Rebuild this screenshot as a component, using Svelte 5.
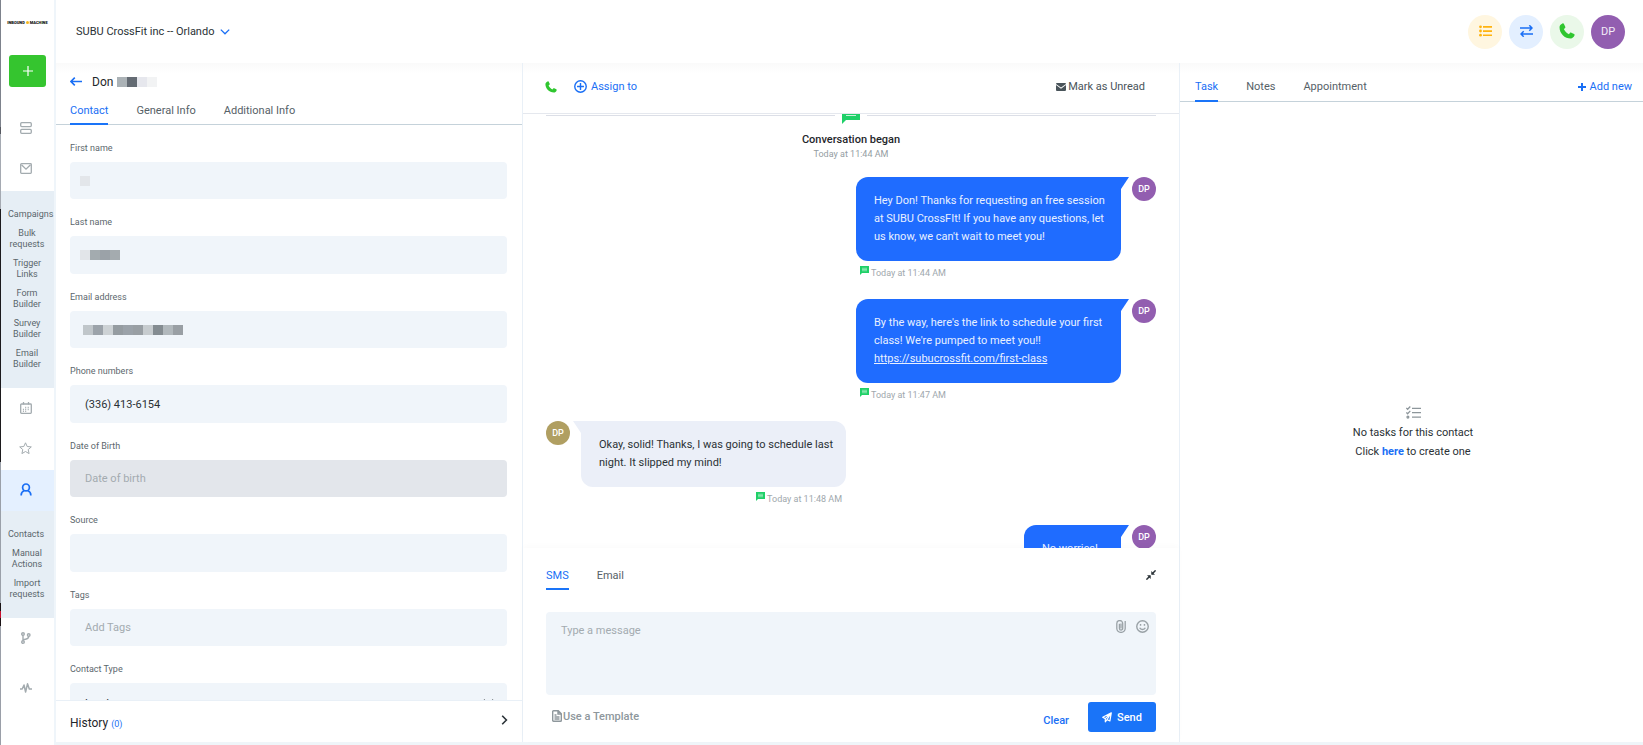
<script>
  const campaignLinks = [['Bulk', 'requests'], ['Trigger', 'Links'], ['Form', 'Builder'], ['Survey', 'Builder'], ['Email', 'Builder']];
  const contactLinks = [['Manual', 'Actions'], ['Import', 'requests']];

  const fields = [
    { id: 'first', label: 'First name', mask: ['#e3e6ea'] },
    { id: 'last', label: 'Last name', mask: ['#e2e5e9', '#a3abaf', '#9ba2a8', '#a4abaf'] },
    { id: 'email', label: 'Email address', wide: true, mask: ['#c0c6ca', '#9ca3aa', '#cdd2d5', '#959ca1', '#9ba2a9', '#999fa4', '#c7cccf', '#848c91', '#b1b8bc', '#999fa4'] },
    { id: 'phone', label: 'Phone numbers', value: '(336) 413-6154' },
    { id: 'dob', label: 'Date of Birth', placeholder: 'Date of birth', muted: true },
    { id: 'source', label: 'Source' },
    { id: 'tags', label: 'Tags', placeholder: 'Add Tags' },
    { id: 'type', label: 'Contact Type', options: ['Lead', 'Customer'] }
  ];
  const nameMask = ['#abb2b6', '#646b73', '#e6e7ed', '#f2f3f4'];

  const messages = [
    { out: true, text: 'Hey Don! Thanks for requesting an free session\nat SUBU CrossFIt! If you have any questions, let\nus know, we can\'t wait to meet you!', time: 'Today at 11:44 AM' },
    { out: true, text: 'By the way, here\'s the link to schedule your first\nclass! We\'re pumped to meet you!!\n', link: 'https://subucrossfit.com/first-class', time: 'Today at 11:47 AM' },
    { out: false, text: 'Okay, solid! Thanks, I was going to schedule last\nnight. It slipped my mind!', time: 'Today at 11:48 AM' },
    { out: true, short: true, text: 'No worries!' }
  ];
</script>

{#snippet phone(size)}
  <svg width={size} height={size} viewBox="0 0 24 24" fill="currentColor" aria-hidden="true"><path d="M5.2.8c.8-.5 1.8-.2 2.2.6l2 4.1c.4.8.2 1.6-.5 2.2L7.2 9.1c1.5 3.4 4.200 6.100 7.700 7.700l1.400-1.700c.600-.700 1.400-.900 2.200-.500l4.100 2c.800.400 1.100 1.400.600 2.200-1.300 2.600-3.200 4.400-5.400 4.400C8.500 23.200.8 15.500.8 6.200.8 4 2.600 2.100 5.200.8z"/></svg>
{/snippet}

{#snippet sms(size)}
  <svg class="sms" width={size} height={size} viewBox="0 0 18 18" aria-hidden="true"><path d="M0 0h18v14H4l-4 4z" fill="#1fd068"/><path d="M4 4.500h10M4 7h10M4 9.500h10" stroke="#fff" stroke-opacity=".75" stroke-width="1.200"/></svg>
{/snippet}

{#snippet mosaic(cells)}
  <span class="mosaic" aria-hidden="true">{#each cells as c}<i style="background:{c}"></i>{/each}</span>
{/snippet}

<div class="app">
  <aside class="rail">
    <div class="logo">INBOUND<b></b>MACHINE</div>
    <button class="create" aria-label="Create">
      <svg width="10" height="10" viewBox="0 0 10 10"><path d="M5 0v10M0 5h10" stroke="#fff" stroke-width="1.200"/></svg>
    </button>
    <nav>
      <a href="#dashboard" class="item" aria-label="Dashboard">
        <svg width="12" height="12" viewBox="0 0 12 12" fill="none" stroke="currentColor" stroke-width="1.300"><rect x=".7" y=".7" width="10.600" height="3.900" rx="1"/><rect x=".7" y="7.400" width="10.600" height="3.900" rx="1"/></svg>
      </a>
      <a href="#mail" class="item" aria-label="Mail">
        <svg width="12" height="11" viewBox="0 0 12 11" fill="none" stroke="currentColor" stroke-width="1.300"><rect x=".7" y=".7" width="10.600" height="9.600" rx=".8"/><path d="M1.500 1.800 6 6.200l4.500-4.400"/></svg>
      </a>
      <div class="sub">
        <a href="#campaigns">Campaigns</a>
        {#each campaignLinks as [a, b]}<a href="#{a}">{a}<br />{b}</a>{/each}
      </div>
      <a href="#calendar" class="item" aria-label="Calendar">
        <svg width="12" height="12" viewBox="0 0 12 12" fill="none" stroke="currentColor" stroke-width="1.300"><rect x=".7" y="2" width="10.600" height="9.300" rx=".8"/><path d="M3.500 0v2.500M8.500 0v2.500"/><path d="M5.200 5.500h1M7.700 5.500h1M2.900 7.500h1M5.200 7.500h1M7.700 7.500h1M2.900 9.300h1M5.200 9.300h1"/></svg>
      </a>
      <a href="#reviews" class="item" aria-label="Reviews">
        <svg width="13" height="12" viewBox="0 0 13 12" fill="none" stroke="currentColor" stroke-linejoin="round"><path d="m6.500.8 1.700 3.700 4.100.4-3.100 2.700.9 4-3.600-2.100-3.600 2.100.9-4L.7 4.900l4.100-.4z"/></svg>
      </a>
      <a href="#contacts" class="item active" aria-label="Contacts">
        <svg width="12" height="13" viewBox="0 0 12 13" fill="none" stroke="currentColor" stroke-width="1.700"><circle cx="6" cy="4.400" r="3.400"/><path d="M1.200 12.500V12c0-2.200 1.200-3.700 3-4.300M10.800 12.500V12c0-2.200-1.200-3.700-3-4.300"/></svg>
      </a>
      <div class="sub">
        <a href="#contacts">Contacts</a>
        {#each contactLinks as [a, b]}<a href="#{a}">{a}<br />{b}</a>{/each}
      </div>
      <a href="#workflows" class="item" aria-label="Workflows">
        <svg width="10" height="12" viewBox="0 0 10 12" fill="none" stroke="currentColor" stroke-width="1.400"><circle cx="2" cy="2" r="1.300"/><circle cx="2" cy="10" r="1.300"/><circle cx="7.700" cy="3" r="1.300"/><path d="M2 3.300v5.400M7.700 4.300c0 2-1.700 2.700-3.200 2.900S2 8 2 8.700"/></svg>
      </a>
      <a href="#reporting" class="item last" aria-label="Reporting">
        <svg width="12" height="10" viewBox="0 0 12 10" fill="none" stroke="currentColor" stroke-width="1.500" stroke-linejoin="round"><path d="M0 6h2.200L4 2l1.600 7L7.500.8 9.300 6H12"/></svg>
      </a>
    </nav>
  </aside>

  <div class="main">
    <header class="top">
      <button class="location">SUBU CrossFit inc -- Orlando
        <svg width="10" height="6" viewBox="0 0 10 6" fill="none" stroke="#1a6ff5" stroke-width="1.300"><path d="m.8.6 4.200 4.200L9.200.6"/></svg>
      </button>
      <div class="actions">
        <button class="round yellow" aria-label="Tasks">
          <svg width="13" height="12" viewBox="0 0 13 12" fill="currentColor"><path d="M4 1h9v1.700H4zM4 5.200h9v1.700H4zM4 9.400h9v1.700H4z"/><circle cx="1.500" cy="1.800" r="1.400"/><circle cx="1.500" cy="6" r="1.400"/><circle cx="1.500" cy="10.200" r="1.400"/></svg>
        </button>
        <button class="round blue" aria-label="Switch">
          <svg width="13" height="12" viewBox="0 0 13 12" fill="none" stroke="currentColor" stroke-width="1.500"><path d="M0 3h12M9.300.3 12 3 9.300 5.700M13 9H1M3.700 6.300 1 9l2.700 2.700"/></svg>
        </button>
        <button class="round green" aria-label="Call">{@render phone(16)}</button>
        <button class="round user" aria-label="Account">DP</button>
      </div>
    </header>

    <div class="columns">
      <section class="contact">
        <div class="person">
          <a href="#back" aria-label="Back"><svg width="12" height="9" viewBox="0 0 12 9" fill="none" stroke="#1a6ff5" stroke-width="1.600"><path d="M12 4.500H1M4.800.600.900 4.500l3.900 3.900"/></svg></a>
          <h1>Don</h1>{@render mosaic(nameMask)}
        </div>
        <div class="tabs" role="tablist">
          <button class="tab on" role="tab" aria-selected="true">Contact</button>
          <button class="tab" role="tab" aria-selected="false">General Info</button>
          <button class="tab" role="tab" aria-selected="false">Additional Info</button>
        </div>
        <form>
          {#each fields as f}
            <div class="field">
              <label for={f.id}>{f.label}</label>
              <div class="control" class:muted={f.muted} class:wide={f.wide}>
                {#if f.options}
                  <select id={f.id}>{#each f.options as o}<option>{o}</option>{/each}</select>
                  <svg class="caret" width="11" height="7" viewBox="0 0 11 7" fill="none" stroke="#2b3338" stroke-width="1.600"><path d="m.8.8 4.700 4.700L10.200.8"/></svg>
                {:else}
                  <input id={f.id} type="text" value={f.value ?? ''} placeholder={f.placeholder} />
                  {#if f.mask}{@render mosaic(f.mask)}{/if}
                {/if}
              </div>
            </div>
          {/each}
        </form>
        <button class="history">
          <span>History <small>(0)</small></span>
          <svg width="7" height="10" viewBox="0 0 7 10" fill="none" stroke="#2b3338" stroke-width="1.600"><path d="m1.200.8 4.200 4.200-4.200 4.200"/></svg>
        </button>
      </section>

      <section class="conversation">
        <div class="bar">
          <button class="call" aria-label="Call contact">{@render phone(12)}</button>
          <button class="assign">
            <svg width="13" height="13" viewBox="0 0 12 12" fill="none" stroke="currentColor" stroke-width="1.300"><circle cx="6" cy="6" r="5.300"/><path d="M6 2.800v6.400M2.800 6h6.400"/></svg>
            Assign to
          </button>
          <button class="unread">
            <svg width="10" height="8" viewBox="0 0 10 8" fill="currentColor"><path d="M0 .9C0 .4.4 0 .9 0h8.200c.5 0 .9.400.9.900L5 4.600zM0 2l5 3.700L10 2v5.100c0 .5-.4.900-.9.900H.9C.4 8 0 7.600 0 7.100z"/></svg>
            Mark as Unread
          </button>
        </div>

        <div class="thread">
          <div class="began">
            <div class="rule">{@render sms(18)}</div>
            <strong>Conversation began</strong>
            <span>Today at 11:44 AM</span>
          </div>
          {#each messages as m}
            <article class:out={m.out}>
              <span class="avatar">DP</span>
              <div class="body">
                <p class="bubble" class:short={m.short}><svg class="tail" width="8" height="12" viewBox="0 0 8 12" aria-hidden="true"><path d="M0 0h8L0 12z" fill="currentColor"/></svg>{m.text}{#if m.link}<a href={m.link}>{m.link}</a>{/if}</p>
                {#if m.time}<div class="time">{@render sms(9)}{m.time}</div>{/if}
              </div>
            </article>
          {/each}
        </div>

        <div class="composer">
          <div class="modes">
            <div class="tabs" role="tablist">
              <button class="tab on" role="tab" aria-selected="true">SMS</button>
              <button class="tab" role="tab" aria-selected="false">Email</button>
            </div>
            <button class="collapse" aria-label="Collapse">
              <svg width="10" height="10" viewBox="0 0 10 10" stroke="#2b3338" fill="#2b3338"><path d="M9.600.400 6 4M.400 9.600 4 6" stroke-width="1.500"/><path d="M5.300 1v3.700H9zM4.700 9V5.300H1z" stroke="none"/></svg>
            </button>
          </div>
          <div class="message">
            <textarea aria-label="Message" placeholder="Type a message"></textarea>
            <div class="tools">
              <button aria-label="Attach file"><svg width="10" height="13" viewBox="0 0 10 13" fill="none" stroke="currentColor" stroke-width="1.300"><path d="M9.200 1v7.600a4.100 3.700 0 0 1-8.400 0V3.400a2.900 2.800 0 0 1 5.900 0v5a1.600 1.600 0 0 1-3.300 0V3.700M5 3.500v5"/></svg></button>
              <button aria-label="Emoji"><svg width="13" height="13" viewBox="0 0 12 12" fill="none" stroke="currentColor" stroke-width="1.300"><circle cx="6" cy="6" r="5.300"/><path d="M3.400 7.200c.9 2 4.300 2 5.200 0M4.200 3.800v1.400M7.800 3.800v1.400"/></svg></button>
            </div>
          </div>
          <div class="submit">
            <button class="template">
              <svg width="10" height="12" viewBox="0 0 10 12" fill="none" stroke="currentColor" stroke-width="1.400"><path d="M.7 1.500c0-.5.300-.8.800-.8h4.800l3 3v6.800c0 .5-.3.8-.8.8h-7c-.5 0-.8-.3-.8-.8zM6 .700V4h3.300M2.500 5h2M2.500 7h5M2.500 9h5"/></svg>Use a Template
            </button>
            <button class="clear">Clear</button>
            <button class="send">
              <svg width="10" height="11" viewBox="0 0 10 11" fill="none" stroke="#fff" stroke-width="1.200" stroke-linejoin="round"><path d="M9.300.800.700 5.300l2.600 1.300v3.200l1.700-2.100 2.900 1.200zM3.300 6.600l6-5.800L5 7.700"/></svg>
              Send
            </button>
          </div>
        </div>
      </section>

      <section class="tasks">
        <div class="tabs" role="tablist">
          <button class="tab on" role="tab" aria-selected="true">Task</button>
          <button class="tab" role="tab" aria-selected="false">Notes</button>
          <button class="tab" role="tab" aria-selected="false">Appointment</button>
          <button class="add">
            <svg width="8" height="8" viewBox="0 0 8 8"><path d="M4 0v8M0 4h8" stroke="currentColor" stroke-width="2"/></svg>
            Add new
          </button>
        </div>
        <div class="empty">
          <svg width="15" height="13" viewBox="0 0 15 13" fill="none" stroke="#8d969b" stroke-width="1.300"><path d="M6 2.300h9M6 6.700h9M6 11.100h9M.300 2l1.300 1.300L4.300.500M.300 6.400l1.300 1.300 2.700-2.800"/><circle cx="1.900" cy="11.100" r=".900"/></svg>
          <p>No tasks for this contact</p>
          <p>Click <a href="#new-task">here</a> to create one</p>
        </div>
      </section>
    </div>
  </div>
</div>

<style>
  :global(body) {
    font: 11px/16px Roboto, sans-serif;
    color: #2a3135;
    background: #fff;
  }
  :global(*) { box-sizing: border-box; }
  button, input, textarea, select { font: inherit; color: inherit; background: none; border: 0; padding: 0; margin: 0; outline: 0; }
  button { cursor: pointer; }
  a { color: inherit; text-decoration: none; }
  p, h1 { margin: 0; }
  svg { display: block; flex: none; }

  .app { display: flex; height: 100vh; overflow: hidden; }

  .rail {
    flex: none;
    width: 56px;
    display: flex;
    flex-direction: column;
    border-right: 2px solid #eff5fa;
    padding-left: 1px;
    background: linear-gradient(#7d828c 0 17%, #55585f 17% 18%, #a5aab2 18% 28%, #1c1a1d 28% 62%, #9aa0a9 62% 81%, #1a1214 81% 82%, #c8102e 82% 83%, #1a1214 83% 84%, #9a9fa8 84%) left / 1px 100% no-repeat;
  }
  .logo {
    height: 55px;
    padding-top: 20px;
    display: flex;
    justify-content: center;
    font-size: 4px;
    line-height: 6px;
    font-weight: 900;
    color: #111;
    white-space: nowrap;
  }
  .logo b { width: 3px; height: 3px; margin: 1px 1px 0; border-radius: 2px; background: #f7b61c; }
  .create {
    align-self: center;
    display: grid;
    place-items: center;
    width: 37px;
    height: 32px;
    border-radius: 3px;
    background: #35c52f;
  }
  nav { padding-top: 21px; color: #a3abaf; }
  .item { display: flex; justify-content: center; align-items: center; height: 40px; padding-right: 4px; }
  .item:nth-child(2) { margin-bottom: 3px; }
  .item.last { margin-top: 10px; }
  .item.active { height: 41px; margin-top: 2px; padding-bottom: 3px; background: #e4f0ff; color: #1a6ff5; }
  .sub {
    display: flex;
    flex-direction: column;
    gap: 8px;
    padding: 18px 0 18px 7px;
    background: #e6eef5;
    color: #5a666c;
    font-size: 9px;
    line-height: 11px;
    text-align: center;
  }
  .sub a { width: 38px; white-space: nowrap; }
  .sub a:first-child { text-align: left; }

  .main { flex: 1; min-width: 0; display: flex; flex-direction: column; border-bottom: 3px solid #eff5f9; }
  .top { flex: none; display: flex; align-items: center; justify-content: space-between; height: 63px; padding: 0 18px 0 20px; }
  .location { display: flex; align-items: center; gap: 6px; }
  .actions { display: flex; gap: 7px; }
  .round { display: grid; place-items: center; width: 34px; height: 34px; border-radius: 50%; padding-bottom: 2px; }
  .yellow { background: #fff6e0; color: #ffb30f; }
  .blue { background: #e3efff; color: #1a6ff5; }
  .green { background: #eaf8e9; color: #2fc62f; }
  .user { background: #925eb0; color: #f3ecf7; padding: 0; }

  .columns {
    flex: 1;
    min-height: 0;
    display: grid;
    grid-template-columns: minmax(0, 467fr) minmax(0, 657fr) minmax(0, 463fr);
    background: linear-gradient(#fafafa, #fff 10px);
  }
  section { display: flex; flex-direction: column; min-height: 0; }
  .contact, .conversation { border-right: 1px solid #e9f0f7; }

  .tabs { display: flex; gap: 28px; }
  .tab { color: #566167; border-bottom: 2px solid transparent; white-space: nowrap; }
  .tab.on { color: #1a6ff5; border-color: #1a74f8; }
  .contact > .tabs, .tasks > .tabs {
    padding: 0 11px 0 14px;
    box-shadow: inset 0 -1px #c5d2da;
  }

  .person { display: flex; align-items: center; height: 37px; padding: 0 14px; }
  h1 { font-size: 12px; font-weight: 400; margin: 0 4px 0 10px; color: #1f272b; }
  .mosaic { display: flex; }
  .mosaic i { width: 10px; height: 10px; }
  .contact > .tabs .tab { height: 25px; padding-bottom: 1px; }

  form { flex: 1; min-height: 0; overflow: hidden; padding: 17px 15px 0 14px; }
  .field { display: flex; flex-direction: column; gap: 8px; margin-bottom: 17px; }
  label { font-size: 9px; line-height: 12px; color: #5c676d; }
  .control { display: grid; align-items: center; height: 37px; background: #f0f5fa; border-radius: 4px; }
  .field:nth-child(even) .control { height: 38px; }
  .control > * { grid-area: 1 / 1; }
  .control .mosaic { padding-left: 10px; }
  .control.wide .mosaic { padding-left: 13px; }
  .control.muted { background: #e3e6eb; }
  input, select { width: 100%; height: 100%; padding: 0 15px; appearance: none; }
  select { padding-top: 4px; }
  .caret { justify-self: end; margin: 0 13px 0 0; }
  ::placeholder { color: #a3abb0; opacity: 1; }
  .history {
    flex: none;
    display: flex;
    justify-content: space-between;
    align-items: center;
    height: 42px;
    padding: 0 14px;
    border-top: 1px solid #e9f0f7;
    background: #fff;
    font-size: 12px;
    color: #1f272b;
  }
  .history span { padding-top: 3px; }
  .history svg { margin-bottom: 4px; }
  small { font-size: 9px; color: #1a6ff5; }

  .bar {
    flex: none;
    display: flex;
    align-items: center;
    height: 51px;
    padding: 0 34px 2px 22px;
    border-bottom: 1px solid #e5e8ee;
  }
  .call { color: #2fc62f; margin-right: 17px; }
  .assign, .unread { display: flex; align-items: center; }
  .assign { gap: 4px; color: #1a6ff5; }
  .assign svg { margin-bottom: 2px; }
  .unread { gap: 2px; margin-left: auto; color: #49545a; }

  .thread { flex: 1; min-height: 0; overflow: hidden; padding: 0 23px; }
  .began { display: flex; flex-direction: column; align-items: center; margin: -8px 0 16px; font-size: 9px; line-height: 14px; color: #949da2; }
  .began strong { font-size: 11px; line-height: 15px; font-weight: 500; color: #1f272b; margin-top: 8px; }
  .rule { align-self: stretch; display: flex; align-items: center; gap: 7px; }
  .rule::before, .rule::after { content: ''; flex: 1; height: 1px; background: #dcdfe7; }

  article { display: flex; align-items: flex-start; gap: 11px; margin-bottom: 19px; }
  article.out { flex-direction: row-reverse; }
  .avatar {
    display: grid;
    place-items: center;
    width: 24px;
    height: 24px;
    border-radius: 50%;
    background: #b09f62;
    color: #fff;
    font-size: 9px;
    font-weight: 500;
  }
  .out .avatar { background: #925eb0; }
  .bubble {
    position: relative;
    width: 265px;
    padding: 15px 8px 15px 18px;
    line-height: 18px;
    white-space: pre-line;
    background: #ebeff8;
    border-radius: 0 12px 12px;
  }
  .bubble.short { width: 97px; }
  .bubble a { text-decoration: underline; }
  .out .bubble { background: #1f6cff; color: #e8f0ff; border-radius: 12px 0 12px 12px; }
  .tail { position: absolute; top: 0; right: 100%; color: #ebeff8; transform: scaleX(-1); }
  .out .tail { right: auto; left: 100%; color: #1f6cff; transform: none; }
  .time { display: flex; justify-content: flex-end; gap: 2px; padding: 5px 4px 0; font-size: 9px; line-height: 14px; color: #a0a8ad; }
  .out .time { justify-content: flex-start; }

  .composer { flex: none; padding: 0 23px 10px; box-shadow: 0 -2px 6px rgb(0 0 0 / 2%); }
  .modes { display: flex; justify-content: space-between; padding-top: 17px; }
  .modes .tab { height: 25px; padding-bottom: 1px; }
  .collapse { align-self: flex-start; padding-top: 5px; }
  .message { display: grid; margin: 22px 0 7px; background: #f0f5fa; border-radius: 4px; }
  .message > * { grid-area: 1 / 1; }
  textarea { display: block; height: 83px; padding: 11px 60px 10px 15px; resize: none; }
  .tools { justify-self: end; align-self: start; display: flex; align-items: center; gap: 10px; padding: 8px 7px 0 0; color: #9aa2a7; }
  .submit { display: flex; align-items: center; color: #8e979c; font-weight: 500; }
  .template { display: flex; align-items: center; gap: 1px; padding-left: 6px; }
  .template svg { margin-bottom: 3px; }
  .clear { margin: 8px 19px 0 auto; color: #1a6ff5; }
  .send {
    display: flex;
    align-items: center;
    justify-content: center;
    gap: 5px;
    width: 68px;
    height: 30px;
    padding-top: 1px;
    border-radius: 3px;
    background: #1a74f8;
    color: #fff;
  }

  .tasks > .tabs { flex: none; height: 39px; padding-left: 15px; }
  .tasks .tab { padding-top: 10px; }
  .add { display: flex; align-items: center; gap: 4px; margin-left: auto; padding-top: 8px; color: #1a6ff5; }
  .empty { flex: 1; display: flex; flex-direction: column; align-items: center; justify-content: center; padding: 23px 0 0 3px; line-height: 19px; }
  .empty svg { margin-bottom: 4px; }
  .empty a { color: #1a6ff5; font-weight: 700; }
</style>
